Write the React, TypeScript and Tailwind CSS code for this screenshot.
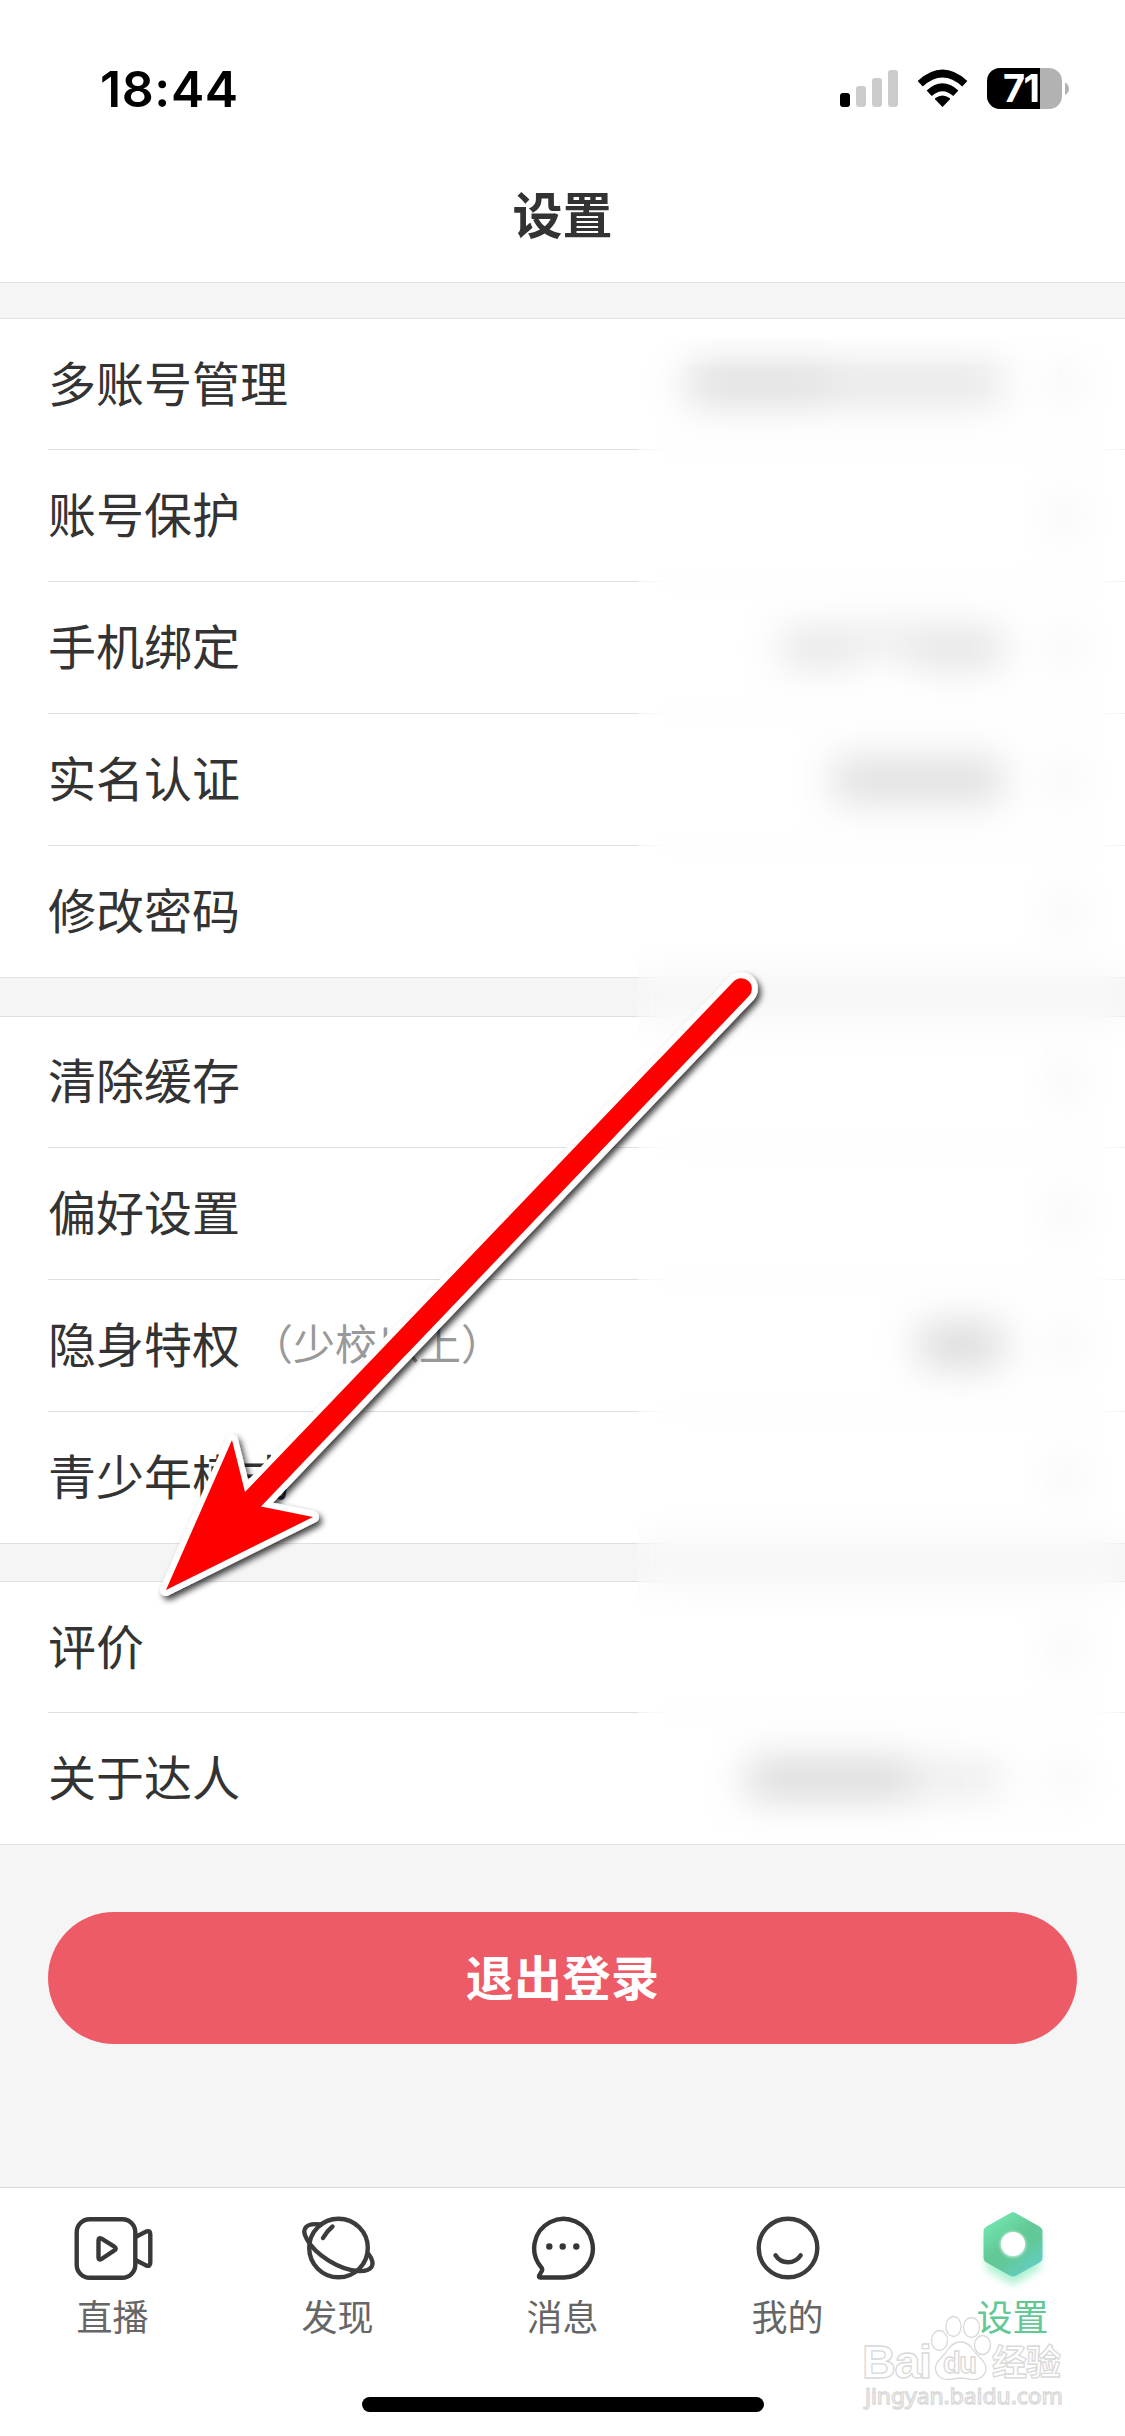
import type { ReactNode } from "react";
import clsx from "clsx";

type Row = {
  label: string;
  note?: string;
  // masked value, drawn as grey blocks under the privacy blur
  mask?: ReactNode;
};

const groups: Row[][] = [
  [
    {
      label: "多账号管理",
      mask: (
        <>
          <i className="h-9 w-[140px] bg-[#d8d8d8]" />
          <i className="h-9 w-[176px] bg-[#e2e2e2]" />
        </>
      ),
    },
    { label: "账号保护" },
    {
      label: "手机绑定",
      mask: (
        <>
          <i className="h-8 w-[74px] bg-[#e0e0e0]" />
          <i className="mb-4 h-5 w-[56px] bg-[#e0e0e0]" />
          <i className="h-8 w-[92px] bg-[#dcdcdc]" />
        </>
      ),
    },
    { label: "实名认证", mask: <i className="h-10 w-[170px] bg-[#dbdbdb]" /> },
    { label: "修改密码" },
  ],
  [
    { label: "清除缓存" },
    { label: "偏好设置" },
    { label: "隐身特权", note: "（少校以上）", mask: <i className="h-10 w-[84px] bg-[#d6d6d6]" /> },
    { label: "青少年模式" },
  ],
  [
    { label: "评价" },
    {
      label: "关于达人",
      mask: (
        <>
          <i className="h-9 w-[164px] bg-[#d4d4d4]" />
          <i className="h-7 w-[92px] bg-[#e6e6e6]" />
        </>
      ),
    },
  ],
];

function StatusBar() {
  return (
    <div className="flex h-[150px] items-start justify-between pt-[62px] pr-[56px] pl-[100px] text-black">
      <span className="font-[Inter] text-[50px] leading-[54px] font-semibold tracking-[0.6px]">18:44</span>
      <div className="flex pt-[6px]">
        <svg width="58" height="41" viewBox="0 0 58 41">
          <rect x="0" y="25" width="10" height="14" rx="3" />
          <g fill="#cccccc">
            <rect x="16" y="18" width="10" height="21" rx="3" />
            <rect x="32" y="10" width="10" height="29" rx="3" />
            <rect x="48" y="2" width="10" height="37" rx="3" />
          </g>
        </svg>
        <svg className="ml-[19px]" width="51" height="41" viewBox="0 0 51 41">
          <path d="M25.5 39 18.2 31.6Q17.6 30.8 18.4 30.1Q25.5 24.8 32.6 30.1Q33.4 30.8 32.8 31.6Z" />
          <path d="M12.2 25.2Q25.5 13.2 38.8 25.2" fill="none" stroke="#000" strokeWidth="7.6" />
          <path d="M3.2 15.8Q25.5 -4.6 47.8 15.8" fill="none" stroke="#000" strokeWidth="7.6" />
        </svg>
        <div className="ml-[19px] h-[41px] w-[75px] rounded-[13px] bg-[#b2b2b2]">
          <div className="h-full w-[53px] rounded-l-[13px] bg-black pl-[16px] font-[Inter] text-[38px] leading-[41px] font-bold tracking-[-1.5px] text-white">
            71
          </div>
        </div>
        <svg className="ml-[3px]" width="4" height="41" viewBox="0 0 4 41">
          <path d="M0 14.5Q4 17 4 20.8T0 27Z" fill="#b2b2b2" />
        </svg>
      </div>
    </div>
  );
}

function SettingRow({ row, last }: { row: Row; last: boolean }) {
  return (
    <div className="flex h-[132px] pl-12 first:h-[131px] last:h-[131px]">
      <div className={clsx("flex flex-1 items-center", !last && "border-b border-[#e0e0e0]")}>
        <span className="pb-[7px] text-[48px] leading-[64px] text-[#333333]">{row.label}</span>
        {row.note && <span className="ml-[11px] pb-[7px] text-[42px] leading-[64px] text-[#999999]">{row.note}</span>}
        <div className="ml-auto flex items-center">{row.mask}</div>
        <svg className="mr-[50px] ml-[52px]" width="20" height="36" viewBox="0 0 20 36">
          <path d="M3 3 17 18 3 33" fill="none" stroke="#c4c4c4" strokeWidth="5" />
        </svg>
      </div>
    </div>
  );
}

function VideoIcon() {
  return (
    <svg width="80" height="68" viewBox="0 0 80 68" fill="none" stroke="#383838" strokeWidth="4.4" strokeLinejoin="round">
      <rect x="3.7" y="5.2" width="58.6" height="58.6" rx="13" />
      <path d="M25.5 26.5Q25.5 23 28.5 24.7L41 32.3Q44.5 34.5 41 36.7L28.5 45Q25.5 46.5 25.5 43.5Z" />
      <path d="M62.5 23 73 17.6Q77.3 15.8 77.3 20.5V48.5Q77.3 53.2 73 51.4L62.5 46" />
    </svg>
  );
}

function PlanetIcon() {
  return (
    <svg width="76" height="68" viewBox="0 0 76 68" fill="none" stroke="#3c3c3c" strokeWidth="4.4" strokeLinecap="round">
      <circle cx="38.5" cy="34" r="29.3" />
      <path d="M20 10.5C6 8.5 1 15 6.5 24.5C15 41 40 56 58.5 57C73 57.5 76 50 68.5 40" />
      <path d="M23 24Q27 17 32.5 12.5" />
    </svg>
  );
}

function MessageIcon() {
  return (
    <svg width="68" height="68" viewBox="0 0 68 68">
      <path
        d="M34.8 63.5H11.2Q9.5 63.5 10.2 61.5L12.8 57Q13.8 55 12.2 53.2A29.3 29.3 0 1 1 34.8 63.5Z"
        fill="none"
        stroke="#363636"
        strokeWidth="4.4"
        strokeLinejoin="round"
      />
      <g fill="#363636">
        <circle cx="20.3" cy="32.5" r="3.2" />
        <circle cx="33.7" cy="32.5" r="3.2" />
        <circle cx="47.3" cy="32.5" r="3.2" />
      </g>
    </svg>
  );
}

function SmileIcon() {
  return (
    <svg width="68" height="68" viewBox="0 0 68 68" fill="none" stroke="#3c3c3c" strokeWidth="4.4" strokeLinecap="round">
      <circle cx="34" cy="34" r="29.3" />
      <path d="M21.5 41.3Q26 48.3 34 48.3T46.7 41.3" />
    </svg>
  );
}

function HexIcon() {
  return (
    <svg className="overflow-visible" width="68" height="68" viewBox="0 0 68 68">
      <defs>
        <linearGradient id="hex" x1="0.15" y1="0.05" x2="0.8" y2="1">
          <stop offset="0" stopColor="#74e8b0" />
          <stop offset="0.45" stopColor="#62c896" />
          <stop offset="0.65" stopColor="#62c99c" />
          <stop offset="1" stopColor="#62cfcb" />
        </linearGradient>
        <filter id="glow" x="-40%" y="-40%" width="180%" height="180%">
          <feGaussianBlur stdDeviation="4" />
        </filter>
        <filter id="soft" x="-40%" y="-40%" width="180%" height="180%">
          <feGaussianBlur stdDeviation="1.6" />
        </filter>
      </defs>
      <path d="M34 4 61 19V51L34 67 7 51V19Z" fill="#74e8b0" opacity="0.6" transform="translate(0 4)" filter="url(#glow)" />
      <path
        d="M31 -0.8Q34 -2.8 37 -0.8L60.5 12.5Q63.5 14.4 63.5 17.5V43.5Q63.5 46.8 60.5 48.5L37 61.8Q34 63.4 31 61.8L7.5 48.5Q4.5 46.8 4.5 43.5V17.5Q4.5 14.4 7.5 12.5Z"
        fill="url(#hex)"
      />
      <circle cx="34" cy="30.5" r="12.8" fill="#ffffff" opacity="0.7" filter="url(#soft)" />
      <circle cx="34" cy="30" r="12" fill="#ffffff" />
    </svg>
  );
}

const tabs = [
  { name: "直播", icon: VideoIcon },
  { name: "发现", icon: PlanetIcon },
  { name: "消息", icon: MessageIcon },
  { name: "我的", icon: SmileIcon },
  { name: "设置", icon: HexIcon, active: true },
];

function Arrow() {
  return (
    <svg className="pointer-events-none absolute top-[960px] left-[150px] overflow-visible" width="620" height="650" viewBox="150 960 620 650">
      <defs>
        <filter id="arrowShadow" x="-5%" y="-5%" width="110%" height="110%">
          <feDropShadow dx="3" dy="4" stdDeviation="3" floodColor="#000000" floodOpacity="0.75" />
        </filter>
      </defs>
      <g strokeLinejoin="round" filter="url(#arrowShadow)">
        <path
          d="M166 1590 232 1440 245 1492 733.5 981.5A10.6 10.6 0 0 1 749 996L261 1506.5 313 1517Z"
          fill="#ff0000"
          stroke="#ffffff"
          strokeWidth="12"
        />
      </g>
      <path d="M166 1590 232 1440 245 1492 733.5 981.5A10.6 10.6 0 0 1 749 996L261 1506.5 313 1517Z" fill="#ff0000" />
    </svg>
  );
}

function Watermark() {
  return (
    <svg className="pointer-events-none absolute top-[2306px] left-[855px]" width="220" height="116" viewBox="855 2306 220 116">
      <g fill="#ffffff" fillOpacity="0.85" stroke="#d9d9d9" strokeWidth="1.3">
        <text x="862" y="2378" fontFamily="Liberation Sans, sans-serif" fontWeight="700" fontSize="47" textLength="70">
          Bai
        </text>
        <g fillOpacity="0">
          <ellipse cx="939.5" cy="2340.5" rx="8" ry="10" />
          <ellipse cx="953.5" cy="2326.5" rx="7.5" ry="10" />
          <ellipse cx="971.5" cy="2327.5" rx="8" ry="10" />
          <ellipse cx="982.5" cy="2345" rx="8" ry="9.5" />
        </g>
        <path d="M960.5 2342C967 2342 971 2346 974 2351C978 2357 986 2361 986 2368C986 2376 979 2380 972 2379.5C967 2379 965 2378 960.5 2378C956 2378 954 2379.5 948 2379.5C941 2379.5 935.5 2375 935.5 2368C935.5 2361 943 2357 947 2351C950 2346 954 2342 960.5 2342Z" />
        <text x="943" y="2373" fontFamily="Liberation Sans, sans-serif" fontWeight="700" fontSize="29" textLength="34">
          du
        </text>
        <text x="992" y="2375" fontFamily="Noto Sans CJK SC, sans-serif" fontWeight="700" fontSize="35" textLength="69">
          经验
        </text>
        <text x="865" y="2404" fontFamily="Noto Sans, sans-serif" fontSize="22" textLength="198" lengthAdjust="spacingAndGlyphs">
          jingyan.baidu.com
        </text>
      </g>
    </svg>
  );
}

export default function App() {
  return (
    <div className="relative flex h-[2436px] w-[1125px] flex-col overflow-hidden bg-[#f5f5f5] font-['Noto_Sans_CJK_SC',sans-serif]">
      <header className="h-[283px] border-b border-[#e0e0e0] bg-white">
        <StatusBar />
        <h1 className="text-center text-[50px] leading-[125px] font-bold text-[#333333]">设置</h1>
      </header>

      <main className="flex flex-1 flex-col gap-[37.5px] pt-[35px]">
        {groups.map((rows) => (
          <section key={rows[0].label} className="border-y border-[#e0e0e0] bg-white">
            {rows.map((row, i) => (
              <SettingRow key={row.label} row={row} last={i === rows.length - 1} />
            ))}
          </section>
        ))}
        <button className="mx-12 mt-[29.5px] h-[132px] rounded-[66px] bg-[#ed5b66] pb-[6px] text-[48px] font-bold tracking-[0.4px] text-white">
          退出登录
        </button>
      </main>

      <nav className="flex h-[249px] border-t border-[#dcdcdc] bg-white pt-[26px]">
        {tabs.map(({ name, icon: Icon, active }) => (
          <div key={name} className="flex flex-1 flex-col items-center">
            <Icon />
            <span className={clsx("mt-[11px] text-[36px] leading-[44px]", active ? "text-[#62c896]" : "text-[#666666]")}>
              {name}
            </span>
          </div>
        ))}
      </nav>

      {/* privacy blur over the values */}
      <div className="absolute top-[338px] left-[638px] h-[1498px] w-[487px] backdrop-blur-[20px]" />
      <Arrow />
      <Watermark />
      <div className="absolute top-[2397px] left-[362px] h-[15px] w-[402px] rounded-full bg-black" />
    </div>
  );
}
